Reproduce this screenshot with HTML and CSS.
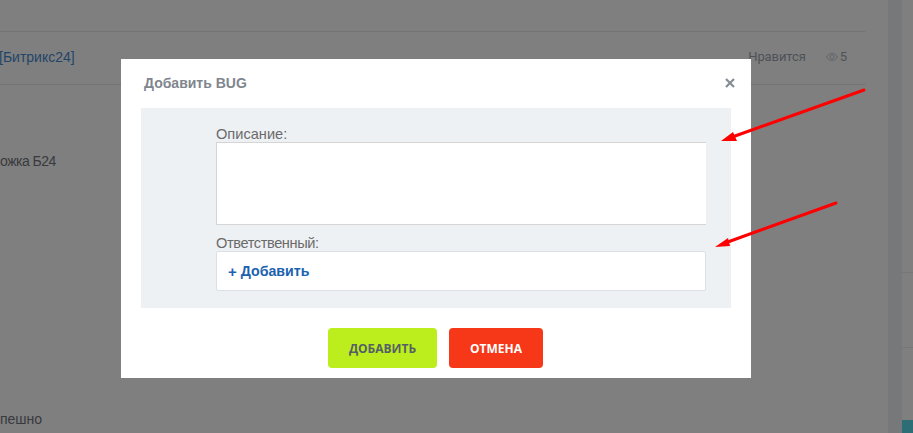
FILE: index.html
```html
<!DOCTYPE html>
<html lang="ru">
<head>
<meta charset="utf-8">
<title>Добавить BUG</title>
<link rel="stylesheet" href="styles.css">
</head>
<body>
<div class="page">
  <main class="feed">
    <div class="top"></div>
    <div class="post-head">
      <a class="post-link">[Битрикс24]</a>
      <div class="post-meta">
        <span class="like">Нравится</span>
        <span class="views">
          <svg class="eye" viewBox="0 0 12 10" width="12" height="10"><path d="M.6 5C2 2.6 3.9 1.4 6 1.4S10 2.6 11.4 5C10 7.4 8.100 8.600 6 8.600S2 7.400.6 5Z" fill="none" stroke="#5f6266" stroke-width=".9"/><circle cx="6" cy="5" r="2.100" fill="none" stroke="#5f6266" stroke-width=".9"/></svg>5
        </span>
      </div>
    </div>
    <p class="item item-first">ожка Б24</p>
    <p class="item item-last">пешно</p>
  </main>
  <div class="strip"></div>
  <aside class="side">
    <div class="side-row side-a"></div>
    <div class="side-row side-b"></div>
    <div class="side-row side-c"></div>
    <div class="teal"></div>
  </aside>
</div>

<section class="modal">
  <header class="modal-head">
    <h2 class="modal-title">Добавить BUG</h2>
    <svg class="close" viewBox="0 0 10 10" width="10" height="10"><path d="M1 1 9 9M9 1 1 9" stroke="#868c94" stroke-width="2.200" fill="none"/></svg>
  </header>
  <div class="panel">
    <label class="field-label label-first">Описание:</label>
    <textarea class="area"></textarea>
    <label class="field-label label-second">Ответственный:</label>
    <div class="picker"><span class="plus">+</span> Добавить</div>
  </div>
  <footer class="actions">
    <button class="btn btn-add">ДОБАВИТЬ</button>
    <button class="btn btn-cancel">ОТМЕНА</button>
  </footer>
</section>

<svg class="arrows" viewBox="0 0 913 433" width="913" height="433">
  <path d="M864 90 735 136" stroke="#fe0000" stroke-width="3" stroke-linecap="round"/>
  <path d="M721 141 733 132 737 141Z" fill="#fe0000"/>
  <path d="M836 203 725 243" stroke="#fe0000" stroke-width="3" stroke-linecap="round"/>
  <path d="M715 247 728 238 730 246Z" fill="#fe0000"/>
</svg>
</body>
</html>
```
FILE: styles.css
```css
* { box-sizing: border-box; }
html, body { margin: 0; padding: 0; }
body {
  width: 913px;
  height: 433px;
  overflow: hidden;
  position: relative;
  background: #7f7f7f;
  font-family: "Liberation Sans", Arial, sans-serif;
}
.page { display: flex; height: 433px; }
.feed { width: 865px; margin-right: 23px; display: flex; flex-direction: column; }
.top { height: 32px; border-bottom: 1px solid #737373; }
.post-head {
  height: 53px;
  border-bottom: 1px solid #737373;
  display: flex;
  align-items: center;
  justify-content: space-between;
  padding-bottom: 3px;
}
.post-link { font-size: 14px; color: #1f4568; margin-left: -1px; }
.post-meta {
  display: flex;
  align-items: center;
  gap: 20px;
  padding-right: 18px;
  font-family: Roboto, sans-serif;
  font-size: 13px;
  color: #4e5257;
}
.like { letter-spacing: -.1px; }
.views { display: flex; align-items: center; gap: 2px; font-size: 13px; }
.item { margin: 0; font-size: 14px; line-height: 16px; color: #383a3d; }
.item-first { margin-top: 68px; letter-spacing: -.5px; }
.item-last { margin-top: 242px; }
.strip { width: 14px; background: #77787a; }
.side { width: 11px; display: flex; flex-direction: column; }
.side-row { border-bottom: 1px solid #777; }
.side-a { height: 273px; }
.side-b { height: 75px; }
.side-c { height: 72px; border-bottom: 0; }
.teal { height: 13px; background: #2d6d75; }

.modal {
  position: absolute;
  left: 121px;
  top: 59px;
  width: 630px;
  height: 319px;
  background: #fff;
  display: flex;
  flex-direction: column;
}
.modal-head {
  height: 49px;
  padding: 0 16px 2px 23px;
  display: flex;
  align-items: center;
  justify-content: space-between;
}
.modal-title { margin: 0; font-size: 14px; font-weight: 700; color: #80868e; }
.panel {
  margin: 0 20px;
  height: 200px;
  background: #eef1f4;
  padding: 17px 25px 0 75px;
  display: flex;
  flex-direction: column;
}
.field-label { height: 17px; font-size: 14.600px; line-height: 19px; color: #6a6a6a; }
.label-second { margin-top: 9px; letter-spacing: -.4px; }
.area {
  display: block;
  width: 490px;
  height: 83px;
  margin: 0;
  padding: 0;
  resize: none;
  outline: 0;
  background: #fff;
  border: 1px solid #d5d5d5;
  border-right: 0;
  border-radius: 0;
}
.picker {
  width: 490px;
  height: 40px;
  background: #fff;
  border: 1px solid #dcdfe6;
  border-radius: 2px;
  padding-left: 11px;
  display: flex;
  align-items: center;
  gap: 4px;
  font-size: 14.200px;
  font-weight: 700;
  color: #1b62b0;
}
.plus { font-size: 15px; }
.actions {
  display: flex;
  justify-content: center;
  gap: 12px;
  padding-top: 20px;
  margin-left: -1px;
}
.btn {
  height: 40px;
  border: 0;
  border-radius: 4px;
  padding: 0;
  font-family: "Open Sans", sans-serif;
  font-size: 12px;
  font-weight: 700;
}
.btn-add { width: 109px; background: #bbee1c; color: #565e68; }
.btn-cancel { width: 94px; background: #f63718; color: #fff; }
.arrows { position: absolute; left: 0; top: 0; pointer-events: none; }
```
